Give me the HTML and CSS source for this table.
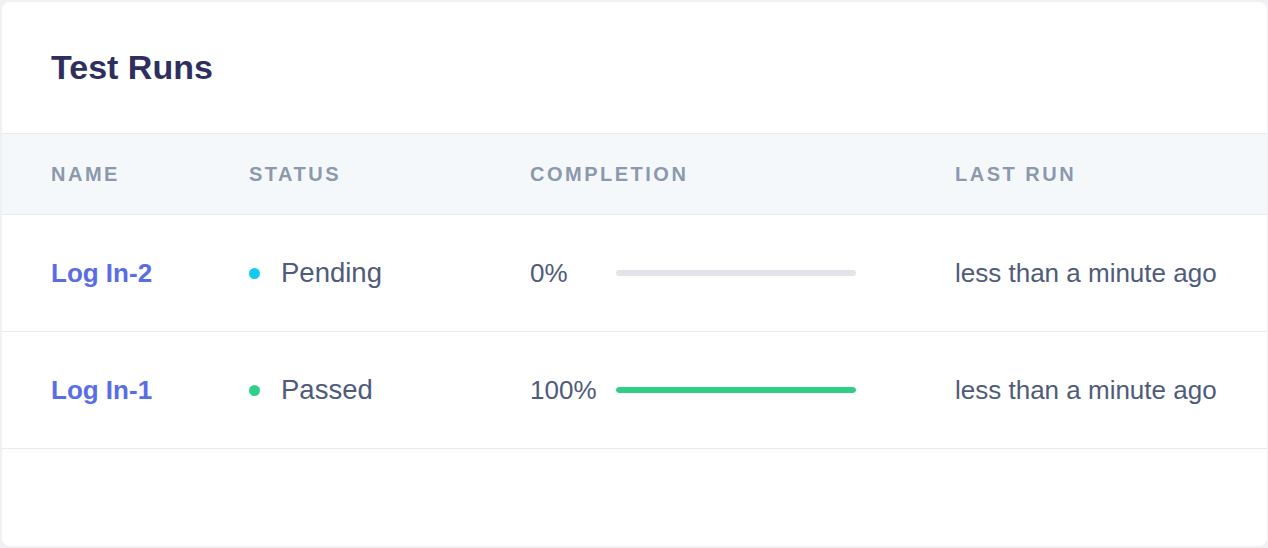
FILE: index.html
```html
<!DOCTYPE html>
<html lang="en">
<head>
<meta charset="utf-8">
<title>Test Runs</title>
<link rel="stylesheet" href="styles.css">
</head>
<body>
<div class="card">
  <div class="card-title"><h1>Test Runs</h1></div>
  <div class="table">
    <div class="row head">
      <div class="cell">Name</div>
      <div class="cell">Status</div>
      <div class="cell">Completion</div>
      <div class="cell">Last Run</div>
    </div>
    <div class="row">
      <div class="cell"><a class="name" href="#">Log In-2</a></div>
      <div class="cell status"><span class="dot pending"></span>Pending</div>
      <div class="cell completion"><span class="pct">0%</span><span class="bar"><span class="fill" style="width:0%"></span></span></div>
      <div class="cell">less than a minute ago</div>
    </div>
    <div class="row">
      <div class="cell"><a class="name" href="#">Log In-1</a></div>
      <div class="cell status"><span class="dot passed"></span>Passed</div>
      <div class="cell completion"><span class="pct">100%</span><span class="bar"><span class="fill" style="width:100%"></span></span></div>
      <div class="cell">less than a minute ago</div>
    </div>
  </div>
</div>
</body>
</html>
```
FILE: styles.css
```css
html, body {
  margin: 0;
  padding: 0;
  background: #f1f1f4;
}
body {
  padding: 2px 1px 2px 2px;
  font-family: "Liberation Sans", Arial, Helvetica, sans-serif;
  color: #4f5b7b;
}
.card {
  background: #ffffff;
  border-radius: 8px;
  height: 544px;
  overflow: hidden;
}
.card-title {
  height: 131px;
  display: flex;
  align-items: center;
  padding-left: 49px;
  border-bottom: 1px solid #e8ebef;
}
.card-title h1 {
  margin: 0;
  font-size: 34px;
  font-weight: 700;
  color: #2e2f5e;
}
.row {
  display: grid;
  grid-template-columns: 198px 281px 425px 1fr;
  padding-left: 49px;
  height: 116px;
  align-items: center;
  border-bottom: 1px solid #e8ebef;
  font-size: 26px;
}
.row.head {
  height: 80px;
  background: #f5f8fb;
  font-size: 20px;
  font-weight: 700;
  text-transform: uppercase;
  letter-spacing: 2.5px;
  color: #8b99ad;
}
.name {
  color: #5a6ee4;
  font-weight: 700;
  text-decoration: none;
}
.status {
  display: flex;
  align-items: center;
  font-size: 27.5px;
}
.dot {
  width: 11px;
  height: 11px;
  border-radius: 50%;
  margin-right: 21px;
  flex: none;
}
.dot.pending { background: #13cbf1; }
.dot.passed { background: #2ecf88; }
.completion {
  display: flex;
  align-items: center;
}
.pct {
  width: 86px;
  flex: none;
}
.bar {
  width: 240px;
  height: 6px;
  border-radius: 3px;
  background: #e3e4e9;
  overflow: hidden;
  display: block;
}
.fill {
  display: block;
  height: 100%;
  background: #2ecf88;
  border-radius: 3px;
}
```
